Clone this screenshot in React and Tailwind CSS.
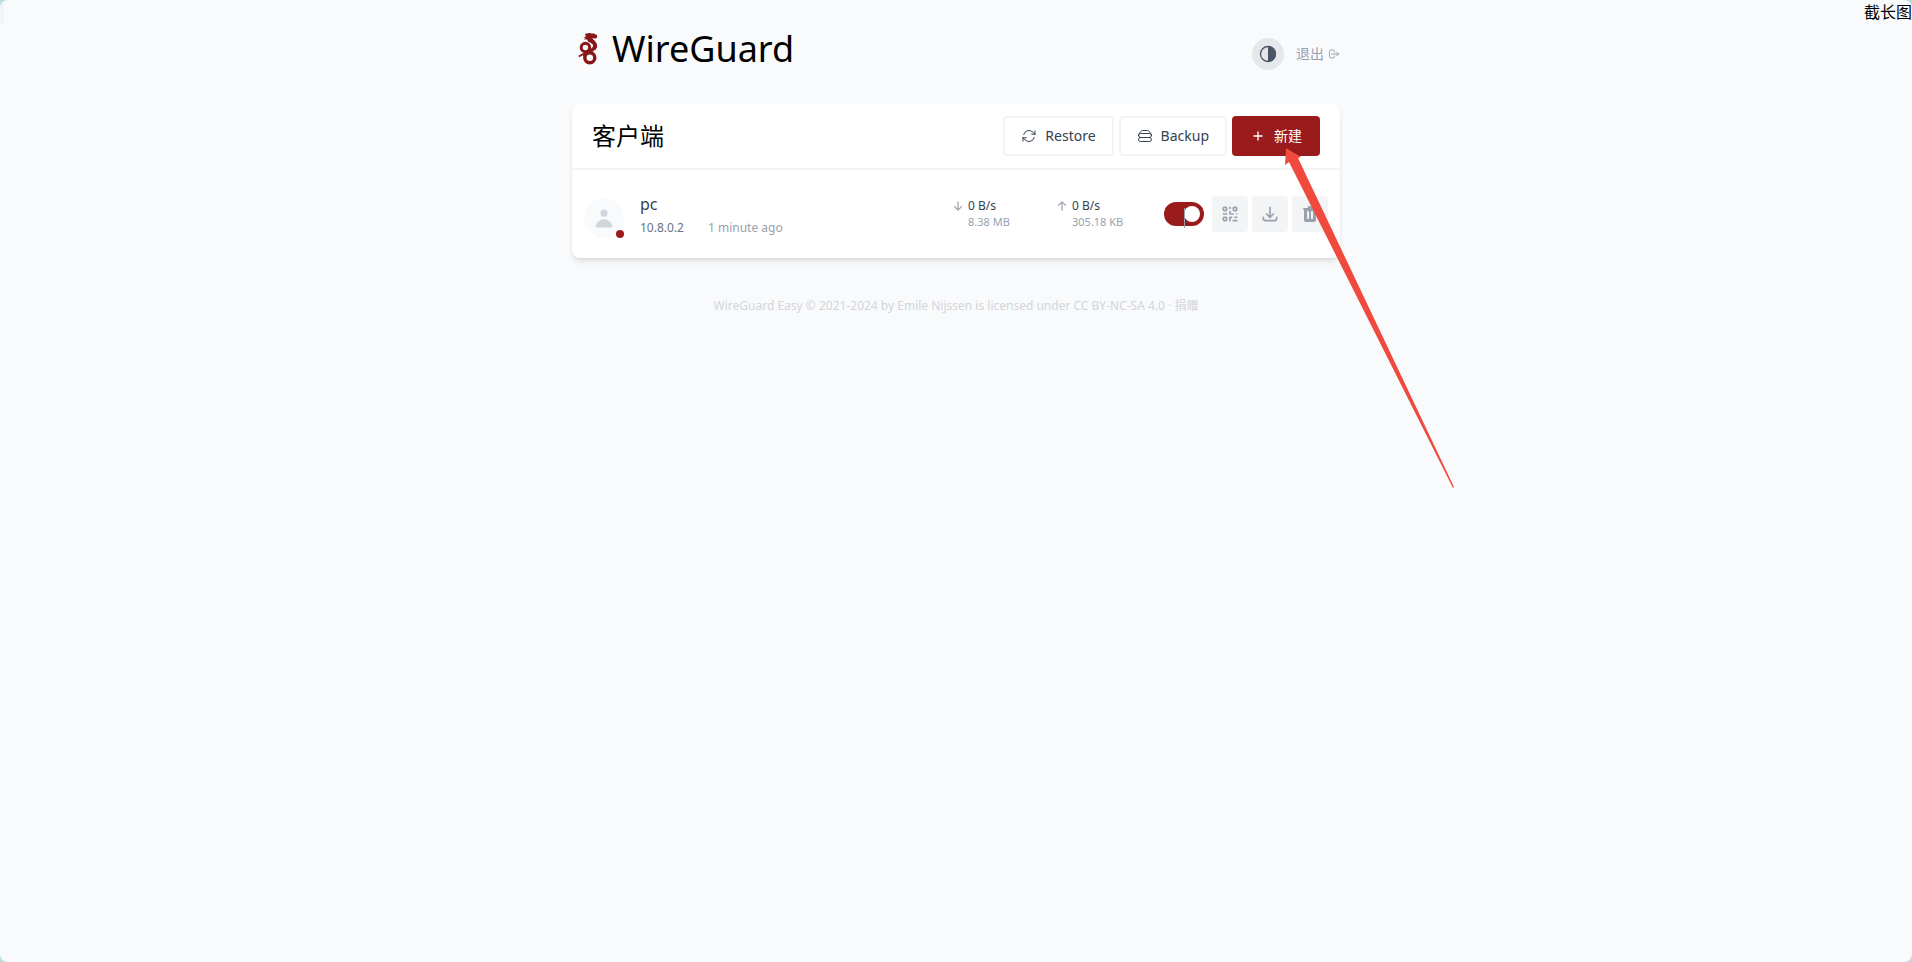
const clients = [
  {
    id: 1,
    name: "pc",
    address: "10.8.0.2",
    lastSeen: "1 minute ago",
    online: true,
    enabled: true,
    rx: { speed: "0 B/s", total: "8.38 MB" },
    tx: { speed: "0 B/s", total: "305.18 KB" },
  },
];

const DOWN = "M16.707 10.293a1 1 0 010 1.414l-6 6a1 1 0 01-1.414 0l-6-6a1 1 0 111.414-1.414L9 14.586V3a1 1 0 012 0v11.586l4.293-4.293a1 1 0 011.414 0z";
const UP = "M3.293 9.707a1 1 0 010-1.414l6-6a1 1 0 011.414 0l6 6a1 1 0 01-1.414 1.414L11 5.414V17a1 1 0 11-2 0V5.414L4.707 9.707a1 1 0 01-1.414 0z";

function Outline({ className, d, width = 2 }) {
  return (
    <svg className={className} fill="none" stroke="currentColor" viewBox="0 0 24 24" aria-hidden="true">
      <path strokeLinecap="round" strokeLinejoin="round" strokeWidth={width} d={d} />
    </svg>
  );
}

function Solid({ className, d }) {
  return (
    <svg className={className} fill="currentColor" viewBox="0 0 20 20" aria-hidden="true">
      <path fillRule="evenodd" clipRule="evenodd" d={d} />
    </svg>
  );
}

function Logo() {
  return (
    <svg className="w-8 h-8" viewBox="0 0 32 32" fill="none" stroke="#88171a" aria-hidden="true">
      <path
        fill="#88171a"
        stroke="none"
        d="M13 .8 15.500.6 17.600-.8l1.200 1.200 3 .2 3 1.400.5 2.200-1.500 1.200-3-.1-.4.500 2.600 2.200 1.900 3 .2 3-1.600 3-3.200-1.200.9-2.300-.4-2.100-2-1.500-2.800-1.400-.8-1.900-3.400-.1 1.800-1.100-2.400-.9 2.600-.5z"
      />
      <circle cx="13.400" cy="14.500" r="4.200" strokeWidth="3" />
      <circle cx="17.800" cy="24.800" r="5" strokeWidth="3.500" />
      <path strokeWidth="3.400" d="M23.200 12.500c-.5 3.500-3 4.600-5.800 5.900-2.600 1.100-4.300 2.400-5 5" />
      <path strokeWidth="1.800" d="M12 20.500 6.800 23.500" />
    </svg>
  );
}

function Header() {
  return (
    <header className="flex items-center justify-between">
      <h1 className="flex items-center gap-2 text-4xl text-black">
        <Logo />
        <span>WireGuard</span>
      </h1>
      <div className="flex items-center gap-3 pt-2.5">
        <button type="button" title="Theme" className="flex items-center justify-center w-8 h-8 rounded-full bg-gray-200 text-gray-600">
          <svg className="w-5 h-5" viewBox="0 0 20 20" fill="none" aria-hidden="true">
            <circle cx="10" cy="10" r="7.500" stroke="currentColor" strokeWidth="1.300" />
            <path fill="currentColor" d="M10 2a8 8 0 010 16z" />
          </svg>
        </button>
        <a href="#logout" className="flex items-center gap-1 text-sm text-gray-400">
          退出
          <Outline
            className="w-3 h-3"
            d="M17 16l4-4m0 0l-4-4m4 4H7m6 4v1a3 3 0 01-3 3H6a3 3 0 01-3-3V7a3 3 0 013-3h4a3 3 0 013 3v1"
          />
        </a>
      </div>
    </header>
  );
}

function Toolbar() {
  const outlined = "flex items-center h-10 px-4 gap-2 rounded border-2 border-gray-100 text-gray-700";
  return (
    <div className="flex items-center justify-between px-5 py-3 border-b-2 border-gray-100">
      <h2 className="text-2xl text-black">客户端</h2>
      <div className="flex gap-[5px]">
        <button type="button" className={outlined}>
          <Outline
            className="w-4 h-4"
            width={1.5}
            d="M16.023 9.348h4.992v-.001M2.985 19.644v-4.992m0 0h4.992m-4.993 0l3.181 3.183a8.25 8.25 0 0013.803-3.7M4.031 9.865a8.25 8.25 0 0113.803-3.7l3.181 3.182m0-4.991v4.99"
          />
          <span className="text-sm">Restore</span>
        </button>
        <button type="button" className={outlined}>
          <Outline
            className="w-4 h-4"
            width={1.5}
            d="M5.25 14.25h13.5m-13.5 0a3 3 0 01-3-3m3 3a3 3 0 100 6h13.5a3 3 0 100-6m-16.5-3a3 3 0 013-3h13.5a3 3 0 013 3m-19.5 0a4.500 4.500 0 01.9-2.7L5.737 5.1a3.375 3.375 0 012.7-1.35h7.126c1.062 0 2.062.5 2.7 1.35l2.587 3.45a4.500 4.500 0 01.9 2.7m0 0a3 3 0 01-3 3"
          />
          <span className="text-sm">Backup</span>
        </button>
        <button type="button" className="flex items-center h-10 px-4 gap-2 rounded border-2 border-[#991b1b] bg-[#991b1b] text-white">
          <Outline className="w-4 h-4" d="M12 6v6m0 0v6m0-6h6m-6 0H6" />
          <span className="text-sm">新建</span>
        </button>
      </div>
    </div>
  );
}

function Transfer({ icon, speed, total }) {
  return (
    <div className="flex gap-1 w-26 pb-1 text-xs">
      <Solid className="w-3 h-3 mt-1 text-gray-400" d={icon} />
      <div>
        <div className="leading-5 text-gray-700">{speed}</div>
        <div className="text-[11px] leading-3 text-gray-400">{total}</div>
      </div>
    </div>
  );
}

function IconButton({ title, children }) {
  return (
    <button type="button" title={title} className="flex items-center justify-center w-9 h-9 rounded bg-gray-100 text-gray-400">
      {children}
    </button>
  );
}

function Client({ client }) {
  return (
    <li className="flex items-center justify-between h-22 px-3">
      <div className="flex items-center gap-4">
        <div className="relative mt-2 flex items-center justify-center w-10 h-10 rounded-full bg-gray-50">
          <Solid className="w-6 h-6 text-gray-300" d="M10 9a3 3 0 100-6 3 3 0 000 6zm-7 9a7 7 0 1114 0H3z" />
          {client.online && <span className="absolute right-0 bottom-0 w-2 h-2 rounded-full bg-[#991b1b]" />}
        </div>
        <div className="pt-1">
          <div className="text-base text-gray-700">{client.name}</div>
          <div className="flex gap-6 text-xs leading-6">
            <span className="text-gray-500">{client.address}</span>
            <span className="text-gray-400">{client.lastSeen}</span>
          </div>
        </div>
      </div>
      <div className="flex items-center">
        <Transfer icon={DOWN} {...client.rx} />
        <Transfer icon={UP} {...client.tx} />
        <div className="flex items-center gap-1 pl-1">
          <label className="relative flex w-10 h-6 mr-1" title="Enable/Disable Client">
            <input
              type="checkbox"
              defaultChecked={client.enabled}
              aria-label="Enable client"
              className="peer appearance-none w-10 h-6 rounded-full bg-gray-200 checked:bg-[#991b1b]"
            />
            <span className="absolute top-1 left-1 w-4 h-4 rounded-full bg-white peer-checked:left-5" />
            <span className="absolute top-1.5 left-5 w-px h-5 bg-gray-400" />
          </label>
          <IconButton title="Show QR Code">
            <Outline
              className="w-5 h-5"
              d="M12 4v1m6 11h2m-6 0h-2v4m0-11v3m0 0h.01M12 12h4.01M16 20h4M4 12h4m12 0h.01M5 8h2a1 1 0 001-1V5a1 1 0 00-1-1H5a1 1 0 00-1 1v2a1 1 0 001 1zm12 0h2a1 1 0 001-1V5a1 1 0 00-1-1h-2a1 1 0 00-1 1v2a1 1 0 001 1zM5 20h2a1 1 0 001-1v-2a1 1 0 00-1-1H5a1 1 0 00-1 1v2a1 1 0 001 1z"
            />
          </IconButton>
          <IconButton title="Download Configuration">
            <Outline className="w-5 h-5" d="M4 16v1a3 3 0 003 3h10a3 3 0 003-3v-1m-4-4l-4 4m0 0l-4-4m4 4V4" />
          </IconButton>
          <IconButton title="Delete Client">
            <Solid
              className="w-5 h-5"
              d="M9 2a1 1 0 00-.894.553L7.382 4H4a1 1 0 000 2v10a2 2 0 002 2h8a2 2 0 002-2V6a1 1 0 100-2h-3.382l-.724-1.447A1 1 0 0011 2H9zM7 8a1 1 0 012 0v6a1 1 0 11-2 0V8zm5-1a1 1 0 00-1 1v6a1 1 0 102 0V8a1 1 0 00-1-1z"
            />
          </IconButton>
        </div>
      </div>
    </li>
  );
}

// Hand-drawn pointer towards the "new" button
function Pointer() {
  return (
    <svg className="absolute top-11 -right-29 w-[172px] h-[344px] pointer-events-none" viewBox="0 0 172 344" aria-hidden="true">
      <path fill="#f04a3e" d="M2 0 17 9 14 10 170 339 169 340 5 14 1 17z" />
    </svg>
  );
}

export default function App() {
  return (
    <div className="min-h-screen flex bg-[#b9dde1] font-['Noto_Sans','Noto_Sans_CJK_SC',sans-serif]">
      <div className="relative flex-1 rounded-lg bg-gray-50 overflow-hidden">
        <span className="absolute top-0 left-0 w-1 h-6 bg-gray-100" />
        <span className="absolute top-0 right-0 text-base leading-6 text-black">截长图</span>
        <div className="max-w-3xl mx-auto pt-7">
          <Header />
          <main className="relative mt-[34px]">
            <section className="rounded-lg bg-white shadow-md overflow-hidden">
              <Toolbar />
              <ul>
                {clients.map((client) => (
                  <Client key={client.id} client={client} />
                ))}
              </ul>
            </section>
            <Pointer />
          </main>
          <footer className="mt-10 text-center text-xs text-gray-300">
            <a href="#wg-easy">WireGuard Easy</a> © 2021-2024 by <a href="#author">Emile Nijssen</a> is licensed under{" "}
            <a href="#license">CC BY-NC-SA 4.0</a> · <a href="#donate">捐赠</a>
          </footer>
        </div>
      </div>
    </div>
  );
}
